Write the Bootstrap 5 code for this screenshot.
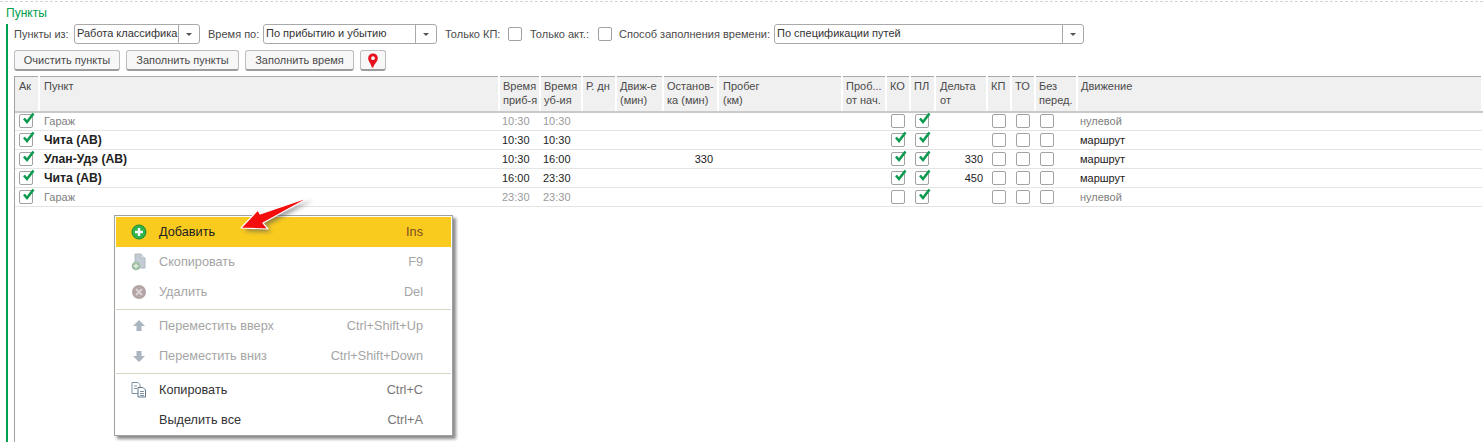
<!DOCTYPE html>
<html lang="ru">
<head>
<meta charset="utf-8">
<title>Пункты</title>
<link href="https://cdn.jsdelivr.net/npm/bootstrap@5.3.0/dist/css/bootstrap.min.css" rel="stylesheet">
<style>
html,body{height:442px;overflow:hidden;background:#fff}
body{font-family:"Liberation Sans",Arial,sans-serif;font-size:11px;line-height:13px;color:#4a4a4a;position:relative}
.dash-top{border-top:1px dashed #d4d4d4;margin-top:1px;height:5px}
.grp-title{color:#00a04a;font-size:12px;line-height:14px;padding-left:6px;height:18px}
.grp-body{border-left:2px solid #00a050;margin-left:6px;padding-left:6px;height:418px}
.tool-row{height:20px;margin-bottom:6px}
.lbl{white-space:nowrap;color:#4a4a4a;flex:none}
.w-l1{width:60px}.w-l2{width:55px;margin-left:8px}.w-l3{width:63px;margin-left:8px}.w-l4{width:68px;margin-left:8px}.w-l5{width:155px;margin-left:7px}
.combo{height:20px;border:1px solid #a9a9a9;border-radius:3px;display:flex;align-items:stretch;background:#fff;flex:none}
.w-c1{width:126px}.w-c2{width:174px}.w-c3{width:310px}
.combo .val{flex:1;padding:2px 0 0 2px;color:#333;overflow:hidden;white-space:nowrap}
.combo .arr{width:21px;border-left:1px solid #a9a9a9;display:flex;align-items:center;justify-content:center}
.combo .arr::after{content:"";border-left:3px solid transparent;border-right:3px solid transparent;border-top:3px solid #555}
.chk{width:14px;height:14px;border:1px solid #a2a2a2;border-radius:2px;display:block;background:#fff;position:relative}
.chk svg{position:absolute;left:1px;top:-3px;width:14px;height:14px}
.btn-row{height:26px;gap:6px}
.tbtn{height:21px;border:1px solid #bdbdbd;border-bottom:2px solid #9c9c9c;border-radius:3px;background:#f7f7f7;color:#4a4a4a;font-size:11px;line-height:13px;padding:0;display:flex;align-items:center;justify-content:center;flex:none}
.w-b1{width:106px}.w-b2{width:113px}.w-b3{width:109px}.w-b4{width:26px}
.grid-box{border-left:1px solid #a0a0a0;height:366px}
table.grd{table-layout:fixed;width:1468px;border-collapse:collapse;font-size:11px;margin:0;border-top:1px solid #a9a9a9}
.grd th{height:35px;background:#f0f0f0;font-weight:400;color:#4a4a4a;vertical-align:top;padding:3px 2px 0 3px;border-right:2px solid #fff;border-bottom:2px solid #c9c9c9;overflow:hidden;white-space:nowrap;line-height:13.5px}
.grd th.wide{padding-left:4px}
.grd td{height:19px;padding:1px 3px 0;border:0;border-bottom:1px solid #e4e4e4;vertical-align:middle;color:#222;white-space:nowrap;overflow:visible;line-height:13px}
.grd .muted td{color:#808080}
.grd .muted td.tm{color:#9a9a9a}
.grd td.pt{font-weight:700;font-size:12.2px;padding-left:5px}
.grd .muted td.pt{font-weight:400;font-size:11px}
.grd td.ctr,.grd td.ak{padding-top:0}
.grd td.ctr .chk{margin:0 0 1px 2px}
.grd td.ak .chk{margin:0 0 1px 1px}
.grd td.num{text-align:right}
.grd td.num-a{padding-right:5px}
.grd td.num-b{padding-right:4px}
.grd td.mv{padding-left:3px}
.c1{width:24px}.c2{width:460px}.c3{width:41px}.c4{width:42px}.c5{width:34px}.c6{width:47px}.c7{width:55px}.c8{width:124px}.c9{width:44px}.c10{width:24px}.c11{width:25px}.c12{width:52px}.c13{width:24px}.c14{width:24px}.c15{width:42px}
.ctx{position:absolute;left:114px;top:215px;width:339px;height:221px;background:#fff;border:1px solid #a0a0a0;padding:1px;box-shadow:3px 3px 3px #8a8a8a;font-size:12.7px;color:#333}
.ctx-item{height:30px;display:flex;align-items:center;padding:0 28px 0 43px;position:relative}
.ctx-item .ic{position:absolute;left:14px;top:6px;width:18px;height:18px}
.ctx-item .sc{margin-left:auto;color:#777}
.ctx-item.on{background:#f9cb1e;color:#222}
.ctx-item.on .sc{color:#7b4a22}
.ctx-item.off{color:#a5a5a5}
.ctx-item.off .sc{color:#a5a5a5}
.ctx-sep{border-top:1px solid #d9d5c3;margin:2px 0 1px;height:0}
.ptr{position:absolute;left:230px;top:190px;width:95px;height:50px;overflow:visible}
</style>
</head>
<body>
<div class="dash-top"></div>
<div class="grp-title">Пункты</div>
<div class="grp-body">
  <div class="tool-row d-flex align-items-center">
    <span class="lbl w-l1">Пункты из:</span>
    <div class="combo w-c1"><div class="val">Работа классифика</div><div class="arr"></div></div>
    <span class="lbl w-l2">Время по:</span>
    <div class="combo w-c2"><div class="val">По прибытию и убытию</div><div class="arr"></div></div>
    <span class="lbl w-l3">Только КП:</span>
    <span class="chk"></span>
    <span class="lbl w-l4">Только акт.:</span>
    <span class="chk"></span>
    <span class="lbl w-l5">Способ заполнения времени:</span>
    <div class="combo w-c3"><div class="val">По спецификации путей</div><div class="arr"></div></div>
  </div>
  <div class="d-flex btn-row">
    <button class="tbtn w-b1">Очистить пункты</button>
    <button class="tbtn w-b2">Заполнить пункты</button>
    <button class="tbtn w-b3">Заполнить время</button>
    <button class="tbtn w-b4"><svg width="12" height="15" viewBox="0 0 12 15"><path fill-rule="evenodd" d="M6 .5C3.200.5 1.200 2.500 1.200 5.200c0 3.300 2.800 4.800 3.600 9.300h1.500c.5-3.600 4.500-5.600 4.500-9.300C10.800 2.500 8.800.5 6 .5zM6 3.300a1.900 1.900 0 1 1 0 3.800 1.900 1.900 0 0 1 0-3.800z" fill="#e8101c"/></svg></button>
  </div>
  <div class="grid-box">
  <table class="grd">
    <colgroup>
      <col class="c1"><col class="c2"><col class="c3"><col class="c4"><col class="c5"><col class="c6"><col class="c7"><col class="c8"><col class="c9"><col class="c10"><col class="c11"><col class="c12"><col class="c13"><col class="c14"><col class="c15"><col>
    </colgroup>
    <thead>
      <tr><th class="wide">Ак</th><th class="wide">Пункт</th><th>Время<br>приб-я</th><th>Время<br>уб-ия</th><th>Р. дн</th><th>Движ-е<br>(мин)</th><th>Останов-<br>ка (мин)</th><th class="wide">Пробег<br>(км)</th><th>Проб...<br>от нач.</th><th>КО</th><th>ПЛ</th><th class="wide">Дельта<br>от</th><th>КП</th><th>ТО</th><th>Без<br>перед.</th><th>Движение</th></tr>
    </thead>
    <tbody id="rows"></tbody>
  </table>
  </div>
</div>

<div class="ctx">
  <div class="ctx-item on">
    <svg class="ic" viewBox="0 0 18 18"><circle cx="9" cy="9" r="7" fill="#2fb54a" stroke="#1c8a37"/><path d="M5 9h8M9 5v8" stroke="#fff" stroke-width="2.400"/></svg>
    <span>Добавить</span><span class="sc">Ins</span>
  </div>
  <div class="ctx-item off">
    <svg class="ic" viewBox="0 0 18 18"><path d="M5 1h6l4 4v10H5z" fill="#c3ccd4" stroke="#b0bac4"/><path d="M11 1v4h4" fill="#e6eaee" stroke="#b0bac4"/><circle cx="6" cy="13" r="4.300" fill="#9dbd9f"/><path d="M3.500 13h5M6 10.500v5" stroke="#e6efe6" stroke-width="1.400"/></svg>
    <span>Скопировать</span><span class="sc">F9</span>
  </div>
  <div class="ctx-item off">
    <svg class="ic" viewBox="0 0 18 18"><circle cx="9" cy="9" r="7" fill="#b5a4a6"/><path d="M6 6l6 6M12 6l-6 6" stroke="#dcd4d5" stroke-width="2"/></svg>
    <span>Удалить</span><span class="sc">Del</span>
  </div>
  <div class="ctx-sep"></div>
  <div class="ctx-item off">
    <svg class="ic" viewBox="0 0 18 18"><path d="M9 3l6 6h-3.500v5h-5V9H3z" fill="#a9b5bf"/></svg>
    <span>Переместить вверх</span><span class="sc">Ctrl+Shift+Up</span>
  </div>
  <div class="ctx-item off">
    <svg class="ic" viewBox="0 0 18 18"><path d="M9 15l6-6h-3.500V4h-5v5H3z" fill="#a9b5bf"/></svg>
    <span>Переместить вниз</span><span class="sc">Ctrl+Shift+Down</span>
  </div>
  <div class="ctx-sep"></div>
  <div class="ctx-item">
    <svg class="ic" viewBox="0 0 18 18"><path d="M2 1.500h6l2 2v9H2z" fill="#fff" stroke="#7f93a3"/><path d="M8 6.500h5l2.500 2.500v7H8z" fill="#fff" stroke="#5f7688"/><path d="M4 5h3M4 7.500h3M10 10.500h4M10 12.500h4M10 14.500h4" stroke="#7f93a3"/></svg>
    <span>Копировать</span><span class="sc">Ctrl+C</span>
  </div>
  <div class="ctx-item">
    <span>Выделить все</span><span class="sc">Ctrl+A</span>
  </div>
</div>

<svg class="ptr" viewBox="0 0 95 50">
  <defs><filter id="sh" x="-20%" y="-30%" width="150%" height="170%"><feGaussianBlur stdDeviation="2"/></filter></defs>
  <polygon points="11,38 28,20 30,24 80,7 33,33 38,39" fill="#555" opacity=".6" filter="url(#sh)" transform="translate(3,3)"/>
  <polygon points="11,38 28,20 30,24 80,7 33,33 38,39" fill="#f40d0d" stroke="#fff" stroke-width="1.200" stroke-linejoin="round"/>
</svg>

<script>
var CK='<svg viewBox="0 0 14 14"><path d="M3 6.500l3 3.500L12.500 1.500" fill="none" stroke="#0b9a4e" stroke-width="2.600"/></svg>';
function c(on,cl){return '<td class="'+cl+'"><span class="chk">'+(on?CK:'')+'</span></td>';}
var data=[
 ['Гараж','10:30','10:30','',0,1,'',1,'нулевой'],
 ['Чита (АВ)','10:30','10:30','',1,1,'',0,'маршрут'],
 ['Улан-Удэ (АВ)','10:30','16:00','330',1,1,'330',0,'маршрут'],
 ['Чита (АВ)','16:00','23:30','',1,1,'450',0,'маршрут'],
 ['Гараж','23:30','23:30','',0,1,'',1,'нулевой']
];
document.getElementById('rows').innerHTML=data.map(function(r){
 return '<tr class="'+(r[7]?'muted':'')+'">'+c(1,'ak')+'<td class="pt">'+r[0]+'</td><td class="tm">'+r[1]+'</td><td class="tm">'+r[2]+'</td><td></td><td></td><td class="num num-a">'+r[3]+'</td><td></td><td></td>'+c(r[4],'ctr')+c(r[5],'ctr')+'<td class="num num-b">'+r[6]+'</td>'+c(0,'ctr')+c(0,'ctr')+c(0,'ctr')+'<td class="mv">'+r[8]+'</td></tr>';
}).join('');
</script>
<script src="https://cdn.jsdelivr.net/npm/bootstrap@5.3.0/dist/js/bootstrap.bundle.min.js"></script>
</body>
</html>
